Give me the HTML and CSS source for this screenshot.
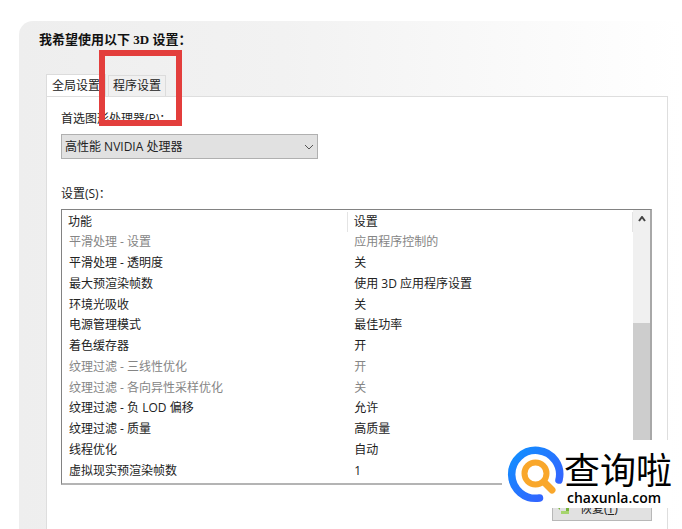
FILE: index.html
```html
<!DOCTYPE html>
<html lang="zh-CN">
  <head>
    <meta charset="UTF-8" />
    <meta name="viewport" content="width=device-width, initial-scale=1.0" />
    <title>3D 设置</title>
    <link rel="stylesheet" href="styles.css" />
  </head>
  <body>
    <main class="window">
      <h1 class="title">我希望使用以下 3D 设置：</h1>

      <div class="tabs" role="tablist">
        <button class="tab active" role="tab" aria-selected="true">全局设置</button>
        <button class="tab" role="tab" aria-selected="false">程序设置</button>
      </div>

      <section class="pane">
        <label class="field-label" for="gpu">首选图形处理器(P)：</label>
        <div class="select-box">
          <select id="gpu">
            <option>高性能 NVIDIA 处理器</option>
          </select>
          <svg class="select-arrow" viewBox="0 0 10 6" aria-hidden="true">
            <path d="M1 1l4 4 4-4" />
          </svg>
        </div>

        <h2 class="field-label list-label" id="list-label">设置(S)：</h2>
        <div class="list">
          <table class="settings" aria-labelledby="list-label">
            <thead>
              <tr><th>功能</th><th>设置</th></tr>
            </thead>
            <tbody>
              <tr class="off"><td>平滑处理 - 设置</td><td>应用程序控制的</td></tr>
              <tr><td>平滑处理 - 透明度</td><td>关</td></tr>
              <tr><td>最大预渲染帧数</td><td>使用 3D 应用程序设置</td></tr>
              <tr><td>环境光吸收</td><td>关</td></tr>
              <tr><td>电源管理模式</td><td>最佳功率</td></tr>
              <tr><td>着色缓存器</td><td>开</td></tr>
              <tr class="off"><td>纹理过滤 - 三线性优化</td><td>开</td></tr>
              <tr class="off"><td>纹理过滤 - 各向异性采样优化</td><td>关</td></tr>
              <tr><td>纹理过滤 - 负 LOD 偏移</td><td>允许</td></tr>
              <tr><td>纹理过滤 - 质量</td><td>高质量</td></tr>
              <tr><td>线程优化</td><td>自动</td></tr>
              <tr><td>虚拟现实预渲染帧数</td><td>1</td></tr>
            </tbody>
          </table>
          <div class="scrollbar">
            <svg class="scroll-up" viewBox="0 0 8 6" aria-hidden="true">
              <path d="M1 5l3-4 3 4" />
            </svg>
            <div class="thumb"></div>
          </div>
        </div>

        <div class="actions">
          <button class="restore">
            <svg class="restore-icon" viewBox="0 0 14 12" aria-hidden="true">
              <path d="M0 3l4-3v2h9v9H5V8h5V5H4v2z" fill="#78b43c" />
              <path d="M5 8h8v3H5z" fill="#a6d46e" />
            </svg>
            <span>恢复(<u>T</u>)</span>
          </button>
        </div>
      </section>

      <!-- highlight around the program settings tab -->
      <div class="highlight"></div>
    </main>

    <div class="brand">
      <svg class="brand-icon" viewBox="0 0 62 68" aria-hidden="true">
        <defs>
          <linearGradient id="ring" x1="0" y1="0" x2="1" y2="1">
            <stop offset="0" stop-color="#1090ff" />
            <stop offset="1" stop-color="#3a5cff" />
          </linearGradient>
        </defs>
        <path d="M57 40A24 24 0 1 0 37.5 58" fill="none" stroke="url(#ring)" stroke-width="7.5" stroke-linecap="round" />
        <circle cx="33.5" cy="33.5" r="11" fill="none" stroke="#f9a72b" stroke-width="6" />
        <path d="M42 42l8 8" stroke="#f9a72b" stroke-width="7" stroke-linecap="round" />
      </svg>
      <div class="brand-text">
        <span class="brand-name">查询啦</span>
        <span class="brand-url">chaxunla.com</span>
      </div>
    </div>
  </body>
</html>
```
FILE: styles.css
```css
* {
  box-sizing: border-box;
}

body {
  margin: 0;
  min-height: 100vh;
  padding: 21px 0 0 19px;
  display: flex;
  flex-direction: column;
  position: relative;
  background: #fff;
  color: #222;
  font-family: "Open Sans", "Noto Sans CJK SC", sans-serif;
  font-size: 12px;
  line-height: 20px;
}

button,
select {
  font: inherit;
  color: inherit;
}

.window {
  flex: 1;
  display: flex;
  flex-direction: column;
  position: relative;
  padding: 9px 14px 0 27px;
  border-top-left-radius: 14px;
  background: linear-gradient(to right, #eeeeee, #f2f2f2 40%, #fdfdfd 90%, #fff);
}

.title {
  margin: 0 0 24px -7px;
  font-family: "Liberation Serif", "Noto Sans CJK SC", serif;
  font-size: 13px;
  font-weight: bold;
  color: #111;
}

.tabs {
  display: flex;
  align-items: flex-end;
  gap: 2px;
}

.tab {
  height: 21px;
  padding: 0 4px;
  line-height: 20px;
  background: #f0f0f0;
  border: 1px solid #dcdcdc;
  border-bottom: none;
}

.tab.active {
  height: 22px;
  padding: 0 5px;
  background: #fff;
}

.pane {
  flex: 1;
  padding: 12px 15px 7px 14px;
  background: #fff;
  border: 1px solid #dedede;
  border-bottom: none;
}

.field-label {
  display: block;
  margin: 0 0 5px;
  font-size: 12px;
  font-weight: normal;
}

.list-label {
  margin-top: 25px;
}

.select-box {
  position: relative;
  width: 257px;
}

.select-box select {
  display: block;
  width: 100%;
  height: 25px;
  padding: 0 24px 0 3px;
  appearance: none;
  background: #e1e1e1;
  border: 1px solid #b0b0b0;
  border-radius: 0;
}

.select-arrow {
  position: absolute;
  right: 4px;
  top: 10px;
  width: 10px;
  height: 6px;
  fill: none;
  stroke: #555;
}

.list {
  display: flex;
  height: 276px;
  border: 1px solid #828282;
  border-right: 2px solid #a8a8a8;
  border-bottom: 2px solid #b4b4b4;
}

.settings {
  flex: 1;
  width: 100%;
  height: 269px;
  margin-top: 2px;
  border-collapse: collapse;
  table-layout: fixed;
}

.settings th,
.settings td {
  height: 20px;
  padding: 0 0 0 7px;
  line-height: 20px;
  text-align: left;
  font-weight: normal;
}

.settings th {
  padding-left: 6px;
  border-right: 1px solid #e4e4e4;
}

.off {
  color: #858585;
}

.scrollbar {
  flex: none;
  width: 17px;
  display: flex;
  flex-direction: column;
  align-items: center;
  background: #f0f0f0;
}

.scroll-up {
  width: 8px;
  height: 6px;
  margin: 6px 0 101px;
  fill: none;
  stroke: #444;
  stroke-width: 2;
}

.thumb {
  flex: 1;
  width: 100%;
  background: #cdcdcd;
}

.actions {
  display: flex;
  justify-content: flex-end;
  margin-top: 12px;
}

.restore {
  display: flex;
  align-items: center;
  gap: 10px;
  width: 100px;
  height: 24px;
  padding: 0 3px;
  background: #e1e1e1;
  border: 1px solid #b8b8b8;
}

.restore-icon {
  width: 14px;
  height: 12px;
}

.highlight {
  position: absolute;
  left: 80px;
  top: 29px;
  width: 83px;
  height: 76px;
  border: 6px solid #e33e3c;
  pointer-events: none;
}

.brand {
  position: absolute;
  right: 10px;
  bottom: 21px;
  height: 68px;
  display: flex;
  background: #fff;
  color: #000;
}

.brand-icon {
  width: 62px;
  height: 68px;
}

.brand-text {
  display: flex;
  flex-direction: column;
  justify-content: flex-end;
  width: 108px;
}

.brand-name {
  font-family: "Noto Sans CJK SC", sans-serif;
  font-size: 36px;
  line-height: 40px;
}

.brand-url {
  padding-left: 3px;
  font-size: 14px;
  font-weight: 600;
  line-height: 20px;
}
```
